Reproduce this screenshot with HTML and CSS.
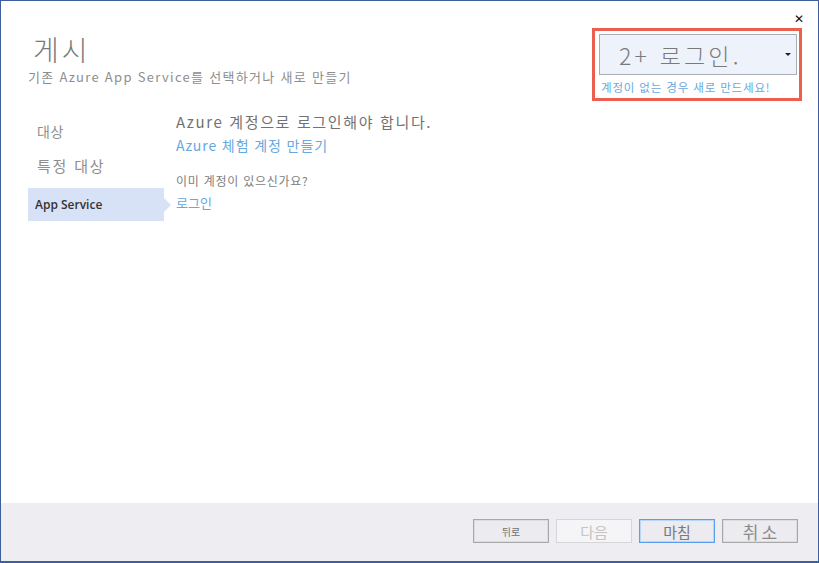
FILE: index.html
```html
<!DOCTYPE html>
<html lang="ko">
<head>
<meta charset="utf-8">
<title>게시</title>
<link rel="stylesheet" href="styles.css">
</head>
<body>
<div class="window">
  <div class="main">
    <div class="topbar"><span class="close">✕</span></div>
    <div class="header">
      <div class="titles">
        <h1 class="title">게시</h1>
        <p class="subtitle">기존 Azure App Service를 선택하거나 새로 만들기</p>
      </div>
      <div class="login-box">
        <div class="dropdown">
          <span class="dd-text">2+ 로그인.</span>
          <span class="dd-arrow"></span>
        </div>
        <a class="create-link">계정이 없는 경우 새로 만드세요!</a>
      </div>
    </div>
    <div class="body">
      <nav class="nav">
        <div class="nav-item first">대상</div>
        <div class="nav-item second">특정 대상</div>
        <div class="nav-item selected">App Service</div>
      </nav>
      <div class="content">
        <p class="need">Azure 계정으로 로그인해야 합니다.</p>
        <a class="link trial">Azure 체험 계정 만들기</a>
        <p class="already">이미 계정이 있으신가요?</p>
        <a class="link signin">로그인</a>
      </div>
    </div>
  </div>
  <div class="footer">
    <button class="btn back">뒤로</button>
    <button class="btn next" disabled>다음</button>
    <button class="btn finish">마침</button>
    <button class="btn cancel">취소</button>
  </div>
</div>
</body>
</html>
```
FILE: styles.css
```css
* { box-sizing: border-box; }
html, body { margin: 0; padding: 0; }
body {
  width: 819px;
  height: 563px;
  font-family: "Noto Sans CJK KR", "Noto Sans", sans-serif;
  background: #ffffff;
  overflow: hidden;
}
.window {
  width: 819px;
  height: 563px;
  border: 1px solid #3d5f9e;
  border-bottom-width: 2px;
  display: flex;
  flex-direction: column;
  background: #ffffff;
}
.main {
  flex: 1;
  display: flex;
  flex-direction: column;
}
.topbar {
  height: 27px;
  display: flex;
  justify-content: flex-end;
  align-items: flex-start;
  padding-right: 14px;
  padding-top: 11px;
}
.close {
  font-size: 12px;
  line-height: 14px;
  color: #111;
  font-weight: bold;
  font-family: "DejaVu Sans", sans-serif;
}
.header {
  display: flex;
  justify-content: space-between;
  padding-left: 27px;
  padding-right: 16px;
}
.titles { padding-top: 4px; }
.title {
  margin: 0 0 0 5px;
  font-size: 28px;
  line-height: 34px;
  font-weight: 300;
  color: #7a7a7a;
  letter-spacing: 3px;
}
.subtitle {
  margin: 2px 0 0 0;
  font-size: 13px;
  line-height: 18px;
  color: #8e8e8e;
  letter-spacing: 1.3px;
}
.login-box {
  width: 210px;
  height: 73px;
  border: 3px solid #ec5f4f;
  padding: 3px 2px 0 4px;
  display: flex;
  flex-direction: column;
}
.dropdown {
  height: 41px;
  background: #eef2fb;
  border: 1px solid #a9adb5;
  display: flex;
  align-items: center;
  justify-content: space-between;
  padding: 0 5px 0 19px;
}
.dd-text {
  font-size: 23px;
  line-height: 30px;
  color: #7a7a7a;
  letter-spacing: 3.2px;
  font-weight: 300;
}
.dd-arrow {
  width: 0;
  height: 0;
  border-left: 3px solid transparent;
  border-right: 3px solid transparent;
  border-top: 3px solid #222;
}
.create-link {
  margin-top: 4px;
  padding-left: 2px;
  font-size: 11.5px;
  line-height: 16px;
  color: #68a8e0;
  letter-spacing: 0.85px;
  white-space: nowrap;
}
.body {
  display: flex;
  padding-left: 27px;
  margin-top: 10px;
}
.nav {
  width: 136px;
  display: flex;
  flex-direction: column;
}
.nav-item {
  color: #8e8e8e;
  padding-left: 9px;
}
.nav-item.first {
  font-size: 14px;
  line-height: 20px;
  margin-top: 10px;
  letter-spacing: 0.5px;
}
.nav-item.second {
  font-size: 15px;
  line-height: 22px;
  margin-top: 14px;
  letter-spacing: 1.8px;
}
.nav-item.selected {
  position: relative;
  margin-top: 11px;
  height: 33px;
  background: #d8e2f7;
  color: #333;
  font-family: "Open Sans", "Noto Sans", sans-serif;
  font-weight: 600;
  font-size: 12px;
  line-height: 33px;
  padding-left: 7px;
}
.nav-item.selected::after {
  content: "";
  position: absolute;
  right: -7px;
  top: 10px;
  border-top: 7px solid transparent;
  border-bottom: 7px solid transparent;
  border-left: 7px solid #d8e2f7;
}
.content {
  padding-left: 12px;
  display: flex;
  flex-direction: column;
  align-items: flex-start;
}
.content p { margin: 0; }
.need {
  font-size: 15px;
  line-height: 22px;
  color: #727272;
  letter-spacing: 1.65px;
}
.link {
  color: #68a8e0;
  cursor: pointer;
}
.trial {
  font-size: 14px;
  line-height: 22px;
  margin-top: 1px;
  letter-spacing: 0.9px;
}
.already {
  font-size: 12px;
  line-height: 18px;
  color: #7e7e7e;
  margin-top: 16px !important;
  letter-spacing: 0.75px;
}
.signin {
  font-size: 13px;
  line-height: 20px;
  margin-top: 3px;
  letter-spacing: 0;
}
.footer {
  height: 58px;
  background: #eeeef2;
  display: flex;
  justify-content: flex-end;
  align-items: center;
  gap: 7px;
  padding-right: 20px;
  padding-bottom: 2px;
}
.btn {
  width: 76px;
  height: 24px;
  background: #ebebf0;
  border: 1px solid #a8a8a8;
  box-shadow: inset 0 0 0 1px #dcdce0;
  font-family: "Noto Sans CJK KR", sans-serif;
  color: #6f6f6f;
  padding: 0;
  display: flex;
  align-items: center;
  justify-content: center;
}
.btn.back { font-size: 10px; }
.btn.next {
  background: #f5f5f7;
  border-color: #d6d6da;
  box-shadow: none;
  color: #c4c4c4;
  font-size: 15px;
}
.btn.finish {
  border-color: #5b9df0;
  box-shadow: inset 0 0 0 1px #b9d6f8;
  color: #7a7a7a;
  font-size: 15px;
}
.btn.cancel {
  font-size: 17px;
  color: #8a8a8a;
  letter-spacing: 3px;
  padding-left: 3px;
}
```
